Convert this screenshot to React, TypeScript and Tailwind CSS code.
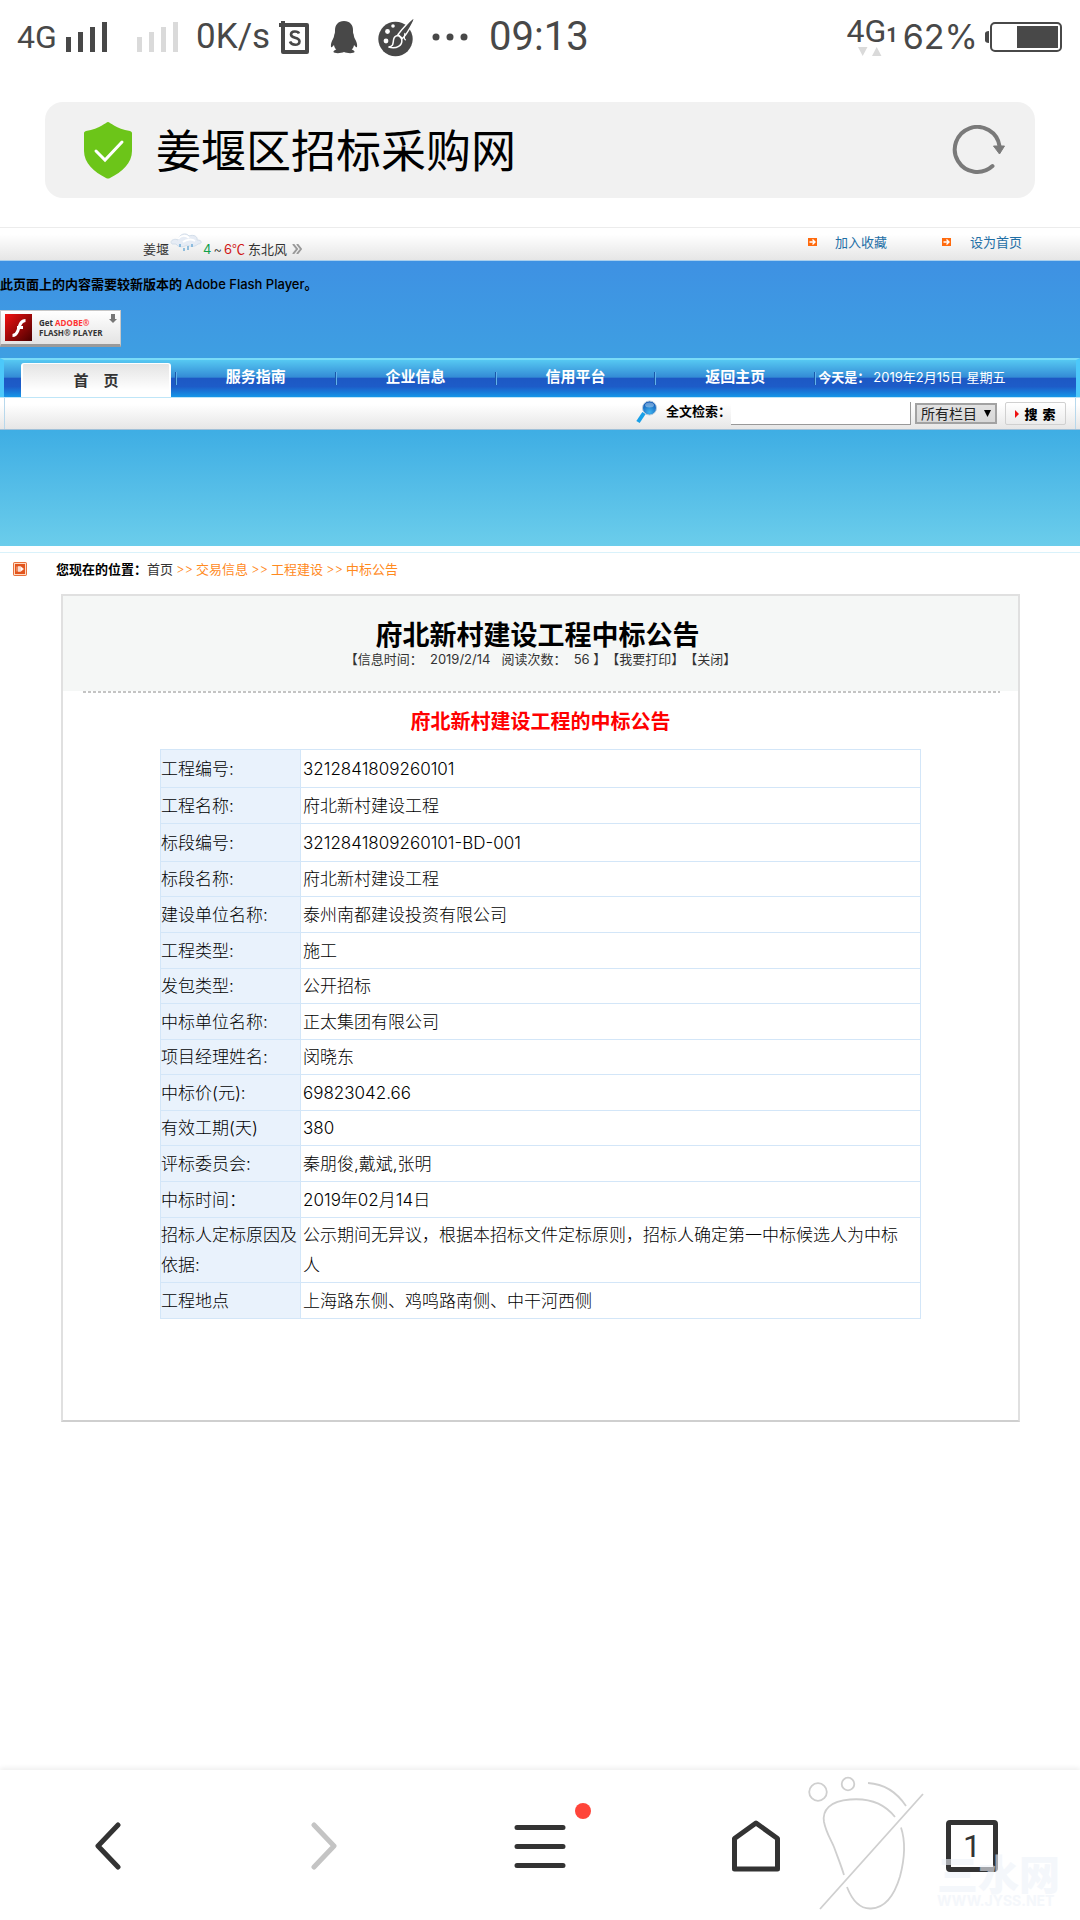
import React from "react";

const rows: { label: string; value: string; height: string }[] = [
  { label: "工程编号:", value: "3212841809260101", height: "h-[38px]" },
  { label: "工程名称:", value: "府北新村建设工程", height: "h-[36px]" },
  { label: "标段编号:", value: "3212841809260101-BD-001", height: "h-[38px]" },
  { label: "标段名称:", value: "府北新村建设工程", height: "h-[35px]" },
  { label: "建设单位名称:", value: "泰州南都建设投资有限公司", height: "h-[36px]" },
  { label: "工程类型:", value: "施工", height: "h-[36px]" },
  { label: "发包类型:", value: "公开招标", height: "h-[35px]" },
  { label: "中标单位名称:", value: "正太集团有限公司", height: "h-[36px]" },
  { label: "项目经理姓名:", value: "闵晓东", height: "h-[35px]" },
  { label: "中标价(元):", value: "69823042.66", height: "h-[36px]" },
  { label: "有效工期(天)", value: "380", height: "h-[35px]" },
  { label: "评标委员会:", value: "秦朋俊,戴斌,张明", height: "h-[36px]" },
  { label: "中标时间：", value: "2019年02月14日", height: "h-[36px]" },
  {
    label: "招标人定标原因及依据:",
    value: "公示期间无异议，根据本招标文件定标原则，招标人确定第一中标候选人为中标人",
    height: "h-[65px]",
  },
  { label: "工程地点", value: "上海路东侧、鸡鸣路南侧、中干河西侧", height: "h-[36px]" },
];

function SignalBars({ className }: { className: string }) {
  return (
    <svg className={className} width="41" height="30" viewBox="0 0 41 30" fill="currentColor">
      <rect x="0" y="15" width="5" height="15" />
      <rect x="12" y="10" width="5" height="20" />
      <rect x="24" y="5" width="5" height="25" />
      <rect x="36" y="0" width="5" height="30" />
    </svg>
  );
}

function StatusBar() {
  return (
    <div className="flex h-[74px] items-center justify-between pr-[18px] pl-[17px] font-['Roboto',sans-serif] text-[#484848]">
      <div className="flex items-center">
        <span className="w-[49px] text-[32px] leading-[38px]">4G</span>
        <SignalBars className="text-[#484848]" />
        <SignalBars className="ml-[30px] text-[#dadada]" />
        <span className="ml-[18px] w-[83px] text-[35px] leading-[40px]">0K/s</span>
        <svg width="30" height="34" viewBox="0 0 30 34" fill="none" stroke="currentColor">
          <path d="M4 1v31h24V5H0" strokeWidth="4" strokeLinejoin="round" />
          <path d="M20 13.500c-1-2.500-8-3-8 1 0 4.500 8.500 2 8.500 7 0 4.500-8 4.200-9.500 0" strokeWidth="2.600" />
        </svg>
        <svg className="ml-[21px]" width="28" height="34" viewBox="0 0 28 34" fill="currentColor">
          <path d="M14 1c6 0 9 4 9 9 0 2 0 3 .5 4 .5 1.500.3 2.500 1.500 5 1.500 3 2.500 5 2 8-.5 1-1.800-.5-3-2-.3 2-1.200 3.500-2.300 4.500 2 .8 3 1.500 2.800 2.500-.5 1.500-7.500 1.500-10.500 0-3 1.500-10 1.500-10.500 0-.2-1 .8-1.700 2.800-2.500C5.200 28.500 4.300 27 4 25c-1.200 1.500-2.500 3-3 2-.5-3 .5-5 2-8 1.200-2.500 1-3.500 1.500-5 .5-1 .5-2 .5-4 0-5 3-9 9-9z" />
        </svg>
        <svg className="ml-[20px]" width="37" height="40" viewBox="0 0 37 40">
          <circle cx="17.500" cy="22" r="17.200" fill="currentColor" />
          <circle cx="9.500" cy="14.500" r="2.400" fill="#fff" />
          <circle cx="15" cy="9" r="1.800" fill="#fff" />
          <circle cx="8" cy="24" r="2.400" fill="#fff" />
          <path d="M36 1c1 2-7 16-11.500 20.500l-4.500-4C24 12 34 1 36 1z" fill="currentColor" stroke="#fff" strokeWidth="1.400" />
          <path d="M19.500 18.500c2 .5 4 2.500 4.300 4.500.7 5-4.800 9.500-13.300 7 5-.7 4.500-3.500 5-7 .3-2.500 2-4 4-4.500z" fill="currentColor" stroke="#fff" strokeWidth="1.500" />
          <path d="M27 16c-1 4-1 7 1 7" fill="none" stroke="#fff" strokeWidth="1.200" />
        </svg>
        <svg className="ml-[17px]" width="36" height="8" viewBox="0 0 36 8" fill="currentColor">
          <circle cx="4" cy="4" r="3.500" />
          <circle cx="18" cy="4" r="3.500" />
          <circle cx="32" cy="4" r="3.500" />
        </svg>
        <span className="ml-[21px] text-[40px] leading-[48px]">09:13</span>
      </div>
      <div className="flex items-center">
        <div className="flex flex-col pb-[4px]">
          <div className="flex items-baseline text-[32px] leading-[32px]">
            4G<span className="text-[20px] leading-[20px] font-bold">1</span>
          </div>
          <svg className="ml-[11px]" width="24" height="9" viewBox="0 0 24 9" fill="#dadada">
            <path d="M0 0h9.500L4.700 9zM14 9h9.500L18.700 0z" />
          </svg>
        </div>
        <span className="ml-[5px] font-['Inter',sans-serif] text-[34px] leading-[40px]">62%</span>
        <svg className="ml-[7px]" width="77" height="30" viewBox="0 0 77 30">
          <path d="M4 9v12c-5 0-4-3-4-6s-1-6 4-6z" fill="currentColor" />
          <rect x="6" y="1" width="70" height="28" rx="4" fill="none" stroke="currentColor" strokeWidth="2" />
          <rect x="32" y="4" width="41" height="22" fill="currentColor" />
        </svg>
      </div>
    </div>
  );
}

function AddressBar() {
  return (
    <div className="mx-[45px] mt-7 flex h-24 items-center rounded-[18px] bg-[#f1f1f1] pr-[29px] pl-[38px]">
      <svg width="50" height="58" viewBox="0 0 50 58">
        <path d="M25 1c2 0 8 7 22 9 1.500.4 2 1.200 2 2.500V30c0 12-10 21-22 27q-2 1-4 0C11 51 1 42 1 30V12.500c0-1.300.5-2.100 2-2.500C17 8 23 1 25 1z" fill="#6cc519" />
        <path d="M13 30l9 9 17-18" fill="none" stroke="#fff" strokeWidth="3" strokeLinecap="round" />
      </svg>
      <h1 className="ml-[23px] flex-1 pt-[4px] text-[45px] leading-[60px] text-black">姜堰区招标采购网</h1>
      <button type="button" aria-label="刷新">
        <svg width="54" height="50" viewBox="0 0 54 50">
          <path d="M40.500 41A22.500 22.500 0 1 1 47.500 21" fill="none" stroke="#7a7a7a" strokeWidth="4" strokeLinecap="round" />
          <path d="M41.500 21h11l-5 8z" fill="#7a7a7a" stroke="#7a7a7a" strokeWidth="1" strokeLinejoin="round" />
        </svg>
      </button>
    </div>
  );
}

function OrangeArrow() {
  return (
    <svg width="9" height="8" viewBox="0 0 9 8">
      <rect width="9" height="8" fill="#ff6a0d" />
      <path d="M1.500 4h5M4.500 1.500L7 4 4.500 6.500" fill="none" stroke="#fff" strokeWidth="1.400" />
    </svg>
  );
}

function TopStrip() {
  return (
    <div className="mt-[29px] flex h-[34px] justify-between border-t border-b border-t-[#ececec] border-b-[#a9cfee] bg-linear-to-b from-white from-20% to-[#e6e6e6] pr-[58px] pl-[143px] text-[13px] leading-[18px] text-[#333]">
      <div className="flex items-start pt-[12px]">
        <span>姜堰</span>
        <svg className="-mt-[8px]" width="34" height="24" viewBox="0 0 34 24">
          <path d="M3 12c-3-3 2-6 6-4 1-6 8-8 11-4 5-2 9 1 8 4 6 0 5 4 1 4-4 4-9 2-11 1-5 3-9 2-11-1z" fill="#e6ecf5" stroke="#d3deea" strokeWidth="1" />
          <path d="M9 7c3-4 8-4 11-1M14 10c4-3 9-3 12-1" fill="none" stroke="#fff" strokeWidth="2" />
          <path d="M11 12v3M15 16v3M19 14v4M23 12v3" stroke="#71add8" strokeWidth="1.500" />
        </svg>
        <span className="text-[#10a04a]">4</span>
        <span className="mx-[2px] font-light">~</span>
        <span className="text-[#d01818]">
          6<span className="font-['Noto_Sans_CJK_SC',sans-serif]">℃</span>
        </span>
        <span className="ml-[3px]">东北风</span>
        <svg className="ml-[5px] mt-[4px]" width="10" height="10" viewBox="0 0 10 10" fill="none" stroke="#999" strokeWidth="2">
          <path d="M1 0l4 5-4 5M5 0l4 5-4 5" />
        </svg>
      </div>
      <div className="flex items-center pb-[5px] text-[#1f6fa6]">
        <OrangeArrow />
        <a href="#favorite" className="ml-[18px]">加入收藏</a>
        <span className="ml-[55px]"><OrangeArrow /></span>
        <a href="#homepage" className="ml-[19px]">设为首页</a>
      </div>
    </div>
  );
}

function FlashButton() {
  return (
    <a href="#flash" className="relative flex h-[37px] w-[121px] items-center border border-[#c8c8c8] border-b-[3px] border-b-[#9a9a9a] bg-linear-to-b from-white to-[#e4e4e4] pl-[4px]">
      <svg width="27" height="27" viewBox="0 0 27 27">
        <defs>
          <linearGradient id="flash-red" x1="0" y1="0" x2="1" y2="1">
            <stop offset="0" stopColor="#f21111" />
            <stop offset="1" stopColor="#4a0000" />
          </linearGradient>
        </defs>
        <rect width="27" height="27" fill="url(#flash-red)" />
        <path d="M20.500 6.500c-6 0-6 7-8 11-1 2.500-2.500 4-5 4M12 13.500h6" fill="none" stroke="#fff" strokeWidth="3" />
      </svg>
      <span className="ml-[7px] font-['Open_Sans',sans-serif] text-[8px] leading-[10px] font-bold text-[#333]">
        Get <span className="text-[#f33]">ADOBE®</span>
        <br />
        FLASH® PLAYER
      </span>
      <svg className="absolute top-[3px] right-[3px]" width="8" height="9" viewBox="0 0 8 9" fill="#777">
        <path d="M2 0h4v5h2L4 9 0 5h2z" />
      </svg>
    </a>
  );
}

function NavItem({ children }: { children: string }) {
  return (
    <a href="#nav" className="flex items-center justify-center">
      <span className="h-[13px] w-[2px] border-l border-l-[#1a57a8] bg-[#62b2ec]" />
      <span className="flex-1 pb-[4px] text-center">{children}</span>
    </a>
  );
}

function Nav() {
  return (
    <nav className="grid h-[39px] grid-cols-[171fr_160fr_160fr_160fr_160fr_262fr] border-x-[4px] border-t-2 border-x-[#4cc8fa] border-t-[#7adcf8] bg-[linear-gradient(to_bottom,#56c8f2_0%,#348cd6_46%,#1d58c4_50%,#1d5cc8_72%,#1596e8_100%)] text-[15px] leading-[20px] font-bold text-white">
      <a href="#home" className="mt-[3px] mr-[4px] ml-[17px] flex items-center justify-center rounded-t-[3px] border-x-2 border-t border-white bg-linear-to-b from-[#e4e4e4] to-white to-80% text-[#333]">
        首　页
      </a>
      <NavItem>服务指南</NavItem>
      <NavItem>企业信息</NavItem>
      <NavItem>信用平台</NavItem>
      <NavItem>返回主页</NavItem>
      <div className="flex items-center text-[13px]">
        <span className="mr-[2px] h-[13px] w-[2px] border-l border-l-[#1a57a8] bg-[#62b2ec]" />
        <span className="pb-[4px]">今天是：</span>
        <span className="ml-[3px] pb-[4px] font-normal">2019年2月15日 星期五</span>
      </div>
    </nav>
  );
}

function SearchRow() {
  return (
    <form className="flex h-[33px] items-center justify-end border-t border-b border-t-[#bfe6f8] border-b-[#9fc0d8] bg-linear-to-b from-white from-20% to-[#e6e6e6]" onSubmit={(e) => e.preventDefault()}>
      <svg className="mr-auto" width="5" height="31" viewBox="0 0 5 31">
        <path d="M4.500 0v31" stroke="#b8d8ec" />
      </svg>
      <svg className="mb-[3px]" width="22" height="24" viewBox="0 0 22 24">
        <defs>
          <radialGradient id="lens" cx="0.5" cy="0.8" r="0.8">
            <stop offset="0" stopColor="#3fb4f0" />
            <stop offset="1" stopColor="#0a4fb0" />
          </radialGradient>
        </defs>
        <path d="M8 13l-6 9" stroke="#18a0e8" strokeWidth="4" />
        <circle cx="13.500" cy="8" r="7" fill="url(#lens)" stroke="#b7cbdc" />
        <ellipse cx="13.500" cy="5" rx="4.500" ry="2.500" fill="#fff" opacity="0.350" />
      </svg>
      <label htmlFor="keyword" className="ml-[8px] pb-[5px] text-[13px] leading-[18px] font-bold text-black">全文检索：</label>
      <input id="keyword" type="text" className="h-[23px] w-[180px] border-r border-b border-[#999] bg-white px-1 text-[13px] outline-none" />
      <div className="relative ml-[4px]">
        <select aria-label="栏目" className="block h-[21px] w-[82px] appearance-none border-2 border-[#a2a2a2] bg-linear-to-b from-[#e2e2e2] to-[#d8d8d8] pl-[4px] text-[14px] leading-[17px] text-[#222]">
          <option>所有栏目</option>
        </select>
        <svg className="pointer-events-none absolute top-[7px] right-[6px]" width="7" height="7" viewBox="0 0 7 7">
          <path d="M0 0h7L3.500 7z" fill="#000" />
        </svg>
      </div>
      <button type="submit" className="mr-[9px] ml-[8px] flex h-[23px] w-[61px] items-center justify-center gap-[5px] rounded-[2px] border border-[#d0d0d0] bg-linear-to-b from-white to-[#ececec] text-[13px] leading-[18px] font-black text-black">
        <svg width="4" height="8" viewBox="0 0 4 8"><path d="M0 0l4 4-4 4z" fill="#e11" /></svg>
        <span className="whitespace-pre">{"搜  索"}</span>
      </button>
      <svg width="5" height="31" viewBox="0 0 5 31">
        <path d="M.5 0v31" stroke="#b8d8ec" />
      </svg>
    </form>
  );
}

function Article() {
  return (
    <article className="mr-[60px] ml-[61px] border-2 border-[#e0e0e0] border-b-[#cfcfcf]">
      <header className="bg-[#f5f7f6] pt-[22px] pb-[25px] text-center">
        <h2 className="pr-[6px] text-[27px] leading-[35px] font-bold text-black">府北新村建设工程中标公告</h2>
        <p className="text-[13px] leading-[13px] whitespace-pre text-[#333]">
          {"【信息时间：  2019/2/14   阅读次数：  56 】"}
          <a href="#print">【我要打印】</a>
          <a href="#close">【关闭】</a>
        </p>
      </header>
      <div className="mr-[18px] ml-[20px] h-[2px] bg-[repeating-linear-gradient(to_right,#c4c4c4_0px,#c4c4c4_3px,#ffffff_3px,#ffffff_5px)]" />
      <h3 className="mt-[15px] text-center text-[20px] leading-[28px] font-bold text-[#f00]">府北新村建设工程的中标公告</h3>
      <div className="px-[97px] pt-[13px] pb-[101px]">
        <table className="w-full border-collapse text-[17px] leading-[30px] font-light text-black">
          <tbody>
            {rows.map((r) => (
              <tr key={r.label} className={r.height}>
                <th scope="row" className="w-[140px] border border-[#d3e6f8] bg-[#e9f2fc] p-0 text-left font-light">{r.label}</th>
                <td className="border border-[#d3e6f8] p-0 pr-2 pl-[2px]">{r.value}</td>
              </tr>
            ))}
          </tbody>
        </table>
      </div>
    </article>
  );
}

function Watermark() {
  return (
    <div className="pointer-events-none absolute right-[20px] bottom-[8px] flex items-end" aria-hidden="true">
      <svg width="118" height="136" viewBox="0 0 118 136" fill="none" stroke="#cfcfcf" strokeWidth="1.800">
        <circle cx="10" cy="16" r="8.800" />
        <circle cx="40" cy="8" r="6.300" />
        <path d="M60 7c17 1 30 11 38 23M87 41C76 27 60 22 42 23.500 22 25 14 34 16 46c2 10 6 16 10 25 4 11 7 18 10 28M39 111c5 13 13 22 24 21.500 14-.5 23-12 29-32 5-19 5-37 1-49M12 133L115 18" />
      </svg>
      <div className="mb-[4px] ml-[11px] text-[#eef2f9] opacity-60">
        <div className="text-[41px] leading-[38px] font-black">三水网</div>
        <div className="text-[14px] leading-[14px] font-bold">WWW.JYSS.NET</div>
      </div>
    </div>
  );
}

function BottomBar() {
  return (
    <footer className="relative mt-auto grid h-[150px] grid-cols-5 place-items-center bg-white pt-[2px] shadow-[0_-2px_5px_rgba(0,0,0,0.07)]">
      <button type="button" aria-label="后退">
        <svg width="26" height="48" viewBox="0 0 26 48" fill="none" stroke="#333" strokeWidth="5" strokeLinecap="round" strokeLinejoin="round">
          <path d="M23 3L3 24l20 21" />
        </svg>
      </button>
      <button type="button" aria-label="前进">
        <svg width="26" height="48" viewBox="0 0 26 48" fill="none" stroke="#c4c4c4" strokeWidth="5" strokeLinecap="round" strokeLinejoin="round">
          <path d="M3 3l20 21L3 45" />
        </svg>
      </button>
      <button type="button" aria-label="菜单" className="relative">
        <svg width="52" height="48" viewBox="0 0 52 48" fill="none" stroke="#333" strokeWidth="5" strokeLinecap="round">
          <path d="M3 5.500h46M3 24.500h46M3 43.500h46" />
        </svg>
        <span className="absolute -top-[19px] -right-[25px] size-4 rounded-full bg-[#ff453a]" />
      </button>
      <button type="button" aria-label="主页">
        <svg width="48" height="52" viewBox="0 0 48 52" fill="none" stroke="#333" strokeWidth="5" strokeLinejoin="round">
          <path d="M2.500 18.500L24 3l21.500 15.500v30.500h-43z" />
        </svg>
      </button>
      <button type="button" aria-label="窗口" className="flex size-[52px] items-center justify-center rounded-[4px] border-[5px] border-[#333] font-['Roboto',sans-serif] text-[32px] leading-[24px] text-[#333]">
        1
      </button>
      <Watermark />
    </footer>
  );
}

export default function App() {
  return (
    <div className="flex min-h-screen flex-col overflow-x-hidden bg-white font-['Inter','Noto_Sans_CJK_SC',sans-serif] [text-spacing-trim:space-all]" lang="zh-CN">
      <StatusBar />
      <AddressBar />
      <TopStrip />
      <div className="bg-[linear-gradient(to_bottom,#3e91e3_0%,#3e9fe2_34%,#3faee4_60%,#6bcdeb_100%)] pb-[116px]">
        <p className="pt-[14px] text-[13px] leading-[18px] font-bold text-black">
          此页面上的内容需要较新版本的 <span className="font-medium">Adobe Flash Player</span>。
        </p>
        <div className="mt-[17px] mb-[11px]">
          <FlashButton />
        </div>
        <Nav />
        <SearchRow />
      </div>
      <div className="mt-[6px] flex items-center border-t border-[#d9f2fb] pt-[7px] pb-[16px] pl-[13px] text-[13px] leading-[18px]">
        <svg width="14" height="14" viewBox="0 0 14 14">
          <rect x="0.500" y="0.500" width="13" height="13" rx="1" fill="#e2541c" stroke="#e8703a" />
          <rect x="1.500" y="1.500" width="11" height="11" fill="none" stroke="#ffd9c0" />
          <path d="M4 4.500v5M5.500 4.500v5h1v-5zM7.500 4.500v5L10.500 7z" fill="#fff" stroke="#fff" strokeWidth="0.600" />
        </svg>
        <div className="ml-[29px] flex gap-[3px] text-[#ff8a1e]">
          <span>
            <b className="text-black">您现在的位置：</b>
            <a href="#home" className="text-[#333]">首页</a>
          </span>
          <span className="font-light">&gt;&gt;</span>
          <a href="#trade">交易信息</a>
          <span className="font-light">&gt;&gt;</span>
          <a href="#build">工程建设</a>
          <span className="font-light">&gt;&gt;</span>
          <a href="#notice">中标公告</a>
        </div>
      </div>
      <Article />
      <BottomBar />
    </div>
  );
}
